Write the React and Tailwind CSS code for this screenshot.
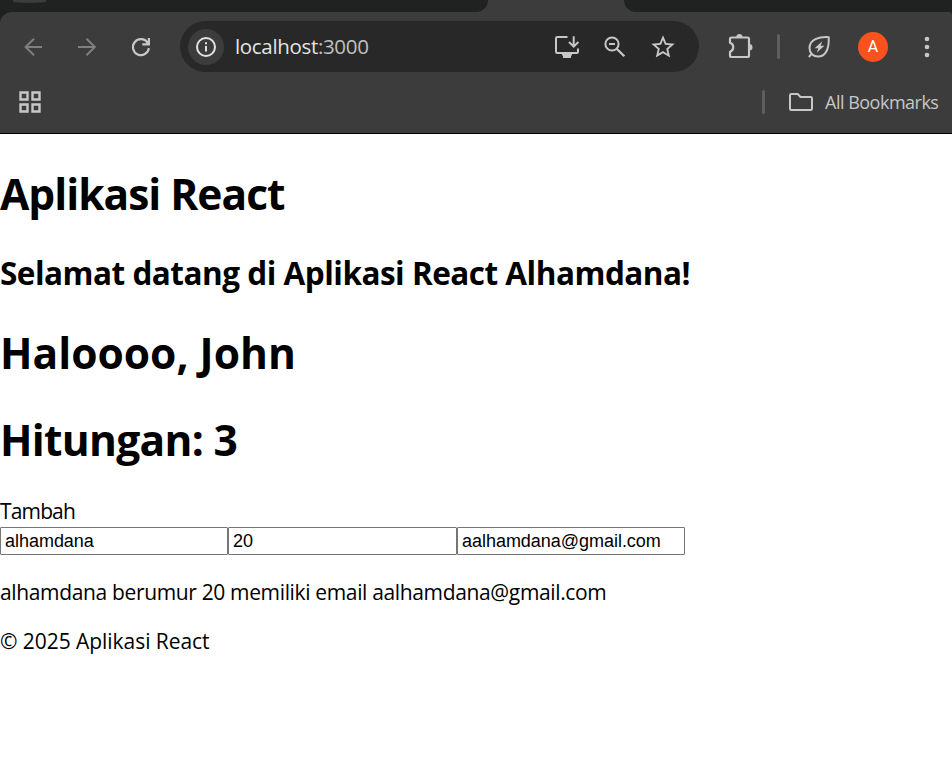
import React, { useState } from "react";
import { MdStarBorder } from "react-icons/md";

const stroke = { fill: "none", stroke: "currentColor" };

function BackIcon() {
  return (
    <svg className="w-[25px] h-[25px] shrink-0 text-[#7f7f7f]" viewBox="0 0 25 25" {...stroke} strokeWidth="2">
      <path d="M21 13H4.5M13 4.7 4.6 13l8.4 8.3" />
    </svg>
  );
}

function ForwardIcon() {
  return (
    <svg className="w-[25px] h-[25px] shrink-0 ml-7 text-[#7f7f7f]" viewBox="0 0 25 25" {...stroke} strokeWidth="2">
      <path d="M4 13h16.5M12.5 4.7l8.4 8.3-8.4 8.3" />
    </svg>
  );
}

function ReloadIcon() {
  return (
    <svg className="w-[25px] h-[25px] shrink-0 ml-[30px] text-[#c7c7c7]" viewBox="0 0 25 25" {...stroke} strokeWidth="2.2">
      <path d="M19.900 14.200A8 8 0 1 1 18.600 8.600L19.600 10" />
      <path d="M19.900 4V10.400H13.300" />
      <path d="M20 6.500V10.500H16.500Z" fill="currentColor" stroke="none" />
    </svg>
  );
}

function InfoIcon() {
  return (
    <span className="w-9 h-9 ml-[8px] shrink-0 rounded-full bg-[#3c3c3c] flex items-center justify-center text-[#e3e3e3]">
      <svg className="w-[22px] h-[22px]" viewBox="0 0 22 22" {...stroke} strokeWidth="2">
        <circle cx="11" cy="11" r="9" />
        <path d="M11 10v5.5M11 6.2v2" />
      </svg>
    </span>
  );
}

function InstallIcon() {
  return (
    <svg className="w-[25px] h-[25px] shrink-0 text-[#c7c7c7]" viewBox="0 0 25 25" {...stroke} strokeWidth="2">
      <path d="M13.5 3H3.3Q2 3 2 4.3V17.7Q2 19 3.3 19H22.7Q24 19 24 17.7V14.5" />
      <path d="M19.7 2.3V12.500M15 8l4.700 4.700L24.400 8" />
      <path d="M8 19h10v2.500h-1V24H9v-2.500H8z" fill="currentColor" stroke="none" />
    </svg>
  );
}

function ZoomOutIcon() {
  return (
    <svg className="w-[25px] h-[25px] shrink-0 ml-[23px] text-[#c7c7c7]" viewBox="0 0 25 25" {...stroke} strokeWidth="2">
      <circle cx="10" cy="10" r="6.600" />
      <path d="M7 10h6" />
      <path d="M14.700 14.700 22.300 22.300" strokeWidth="2.300" />
    </svg>
  );
}

function ExtensionIcon() {
  return (
    <svg className="w-[29px] h-[29px] shrink-0 ml-[27px] text-[#c7c7c7]" viewBox="0 0 29 29" {...stroke} strokeWidth="2.200" strokeLinejoin="round">
      <path d="M5.500 5.500H21.500Q23 5.500 23 7V23.500Q23 25 21.500 25H5.500Q4 25 4 23.500V19.800C8.300 18.500 8.300 12 4 10.800V7Q4 5.500 5.500 5.500Z" />
      <path d="M10.200 5.500a3.200 3.500 0 0 1 6.400 0ZM23 12a3.500 3.200 0 0 1 0 6.400Z" fill="currentColor" stroke="none" />
    </svg>
  );
}

function EnergyLeafIcon() {
  return (
    <svg className="w-[25px] h-[25px] shrink-0 ml-[26px] text-[#c7c7c7]" viewBox="0 0 25 25" {...stroke} strokeWidth="2" strokeLinejoin="round">
      <path d="M22.700 3.200C13 2.600 3.500 5.500 3.500 14C3.500 19.200 7.300 22.600 12 22.600C20 22.600 23.300 14 22.700 3.200Z" />
      <path d="M6 19.500 2.800 23" />
      <path d="M16.200 7.200 8.600 14.200H12.300L10.800 18.800 18.400 11.800H14.700Z" fill="currentColor" stroke="none" />
    </svg>
  );
}

function FolderIcon() {
  return (
    <svg className="w-[26px] h-[22px] shrink-0 ml-[23px] text-[#c7c7c7]" viewBox="0 0 26 22" {...stroke} strokeWidth="2" strokeLinejoin="round">
      <path d="M3.300 3H9.700L12.500 6H22.700Q24 6 24 7.300V17.700Q24 19 22.700 19H3.300Q2 19 2 17.700V4.300Q2 3 3.300 3Z" />
    </svg>
  );
}

function AppsIcon() {
  return (
    <svg className="w-[22px] h-[22px] shrink-0 text-[#c7c7c7]" viewBox="0 0 22 22" {...stroke} strokeWidth="2.400">
      <path d="M1.500 1.500h7v7h-7zM13.500 1.500h7v7h-7zM1.500 13.500h7v7h-7zM13.500 13.500h7v7h-7z" />
    </svg>
  );
}

function TabStrip() {
  return (
    <div className="h-3 bg-[#3c3c3c] flex">
      <div className="w-[488px] h-3 bg-[#1f2221] rounded-br-[12px] pl-[13px]">
        <div className="w-[33px] h-[3px] rounded-b-[50%] bg-[#3c3c3c]" />
      </div>
      <div className="flex-1 ml-[136px] bg-[#1f2221] rounded-bl-[12px]" />
    </div>
  );
}

function Toolbar() {
  return (
    <div className="bg-[#1f2221]">
      <div className="h-[122px] bg-[#3c3c3c] rounded-tl-[12px] rounded-tr-[3px] border-b border-black pt-[9px]">
        <div className="flex items-center h-[51px] pl-[21px]">
          <BackIcon />
          <ForwardIcon />
          <ReloadIcon />
          <div className="w-[519px] h-[51px] ml-[26px] shrink-0 rounded-full bg-[#282828] flex items-center">
            <InfoIcon />
            <div className="ml-[11px] w-[319px] -mt-[2px] text-[20.5px] leading-[28px] tracking-[-0.33px] text-[#e3e3e3] whitespace-nowrap">
              <span>localhost</span>
              <span className="text-[#c0c0c0]">:3000</span>
            </div>
            <InstallIcon />
            <ZoomOutIcon />
            <MdStarBorder className="w-7 h-7 shrink-0 ml-[22px] text-[#c7c7c7]" />
          </div>
          <ExtensionIcon />
          <span className="w-[3px] h-[25px] ml-[22px] rounded-full bg-[#5e5e5e]" />
          <EnergyLeafIcon />
          <span className="w-[30px] h-[30px] shrink-0 ml-[27px] mt-px rounded-full bg-[#f9521e] text-white text-[16px] leading-[30px] text-center font-[Roboto,sans-serif]">A</span>
          <svg className="w-[7px] h-[25px] shrink-0 ml-[35px] text-[#c7c7c7]" viewBox="0 0 7 25" fill="currentColor">
            <circle cx="4" cy="5" r="2.300" />
            <circle cx="4" cy="13" r="2.300" />
            <circle cx="4" cy="21" r="2.300" />
          </svg>
        </div>
        <div className="flex items-center h-[60px] pl-[19px]">
          <AppsIcon />
          <span className="w-[3px] h-6 ml-[721px] rounded-full bg-[#5e5e5e]" />
          <FolderIcon />
          <span className="ml-[11px] text-[18px] leading-[24px] tracking-[-0.5px] text-[#c7c7c7] whitespace-nowrap">All Bookmarks</span>
        </div>
      </div>
    </div>
  );
}

const field =
  "h-7 border border-[#767676] rounded-[1px] bg-white pl-[4px] text-[18px] leading-[26px] tracking-[-0.03px] font-['Liberation_Sans',Arial,sans-serif] text-black outline-none";

export default function App() {
  const [nama, setNama] = useState("alhamdana");
  const [umur, setUmur] = useState("20");
  const [email, setEmail] = useState("aalhamdana@gmail.com");

  return (
    <div className="w-full h-[777px] overflow-hidden bg-white text-black font-['Open_Sans','Noto_Sans',sans-serif]">
      <TabStrip />
      <Toolbar />
      <main className="whitespace-nowrap text-[21px] leading-[30px]">
        <h1 className="mt-[30px] text-[42.5px] leading-[60px] tracking-[-1px] font-bold"><span>Aplikasi React</span></h1>
        <h2 className="mt-[27px] text-[31.5px] leading-[44px] tracking-[-0.5px] font-bold"><span>Selamat datang di Aplikasi React Alhamdana!</span></h2>
        <h1 className="mt-[28px] text-[42.5px] leading-[60px] font-bold"><span>Haloooo, John</span></h1>
        <h1 className="mt-[27px] text-[42.5px] leading-[60px] tracking-[-0.7px] font-bold"><span>Hitungan: 3</span></h1>
        <div className="mt-[26px] tracking-[-0.85px]"><span>Tambah</span></div>
        <form className="mt-px flex">
          <input className={`${field} w-[228px]`} value={nama} onChange={(e) => setNama(e.target.value)} />
          <input className={`${field} w-[229px]`} value={umur} onChange={(e) => setUmur(e.target.value)} />
          <input className={`${field} w-[228px]`} value={email} onChange={(e) => setEmail(e.target.value)} />
        </form>
        <p className="mt-[22px] tracking-[-0.35px]"><span>{nama} berumur {umur} memiliki email {email}</span></p>
        <footer className="mt-[19px] tracking-[-0.05px]"><span>© 2025 Aplikasi React</span></footer>
      </main>
    </div>
  );
}
